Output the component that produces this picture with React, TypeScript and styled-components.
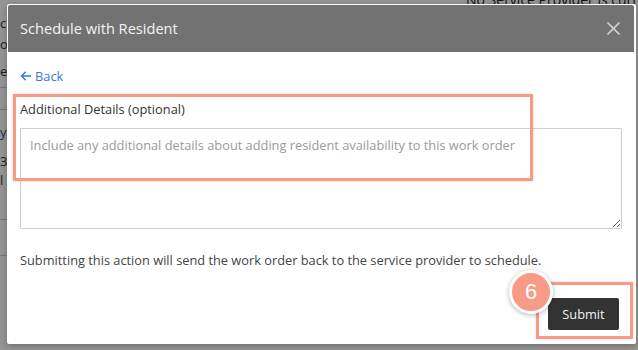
import React from "react";
import styled, { createGlobalStyle } from "styled-components";

const Global = createGlobalStyle`
  html, body { margin: 0; padding: 0; }
  body {
    width: 638px; height: 350px; overflow: hidden;
    font-family: "Open Sans", "Noto Sans", Arial, sans-serif;
    background: #ffffff;
  }
  * { box-sizing: border-box; }
`;

const Page = styled.div`
  position: relative;
  width: 638px;
  height: 350px;
  overflow: hidden;
  display: grid;
  grid-template-columns: 120px 1fr 200px;
  font-size: 13px;
  color: #222;
`;

const SideCol = styled.div`
  display: flex;
  flex-direction: column;
`;

const BgLine = styled.div<{ $h: number; $color?: string; $rule?: boolean }>`
  height: ${(p) => p.$h}px;
  line-height: ${(p) => p.$h}px;
  padding-left: 0;
  color: ${(p) => p.$color || "#333"};
  white-space: nowrap;
  border-bottom: ${(p) => (p.$rule ? "1px solid #ccc" : "none")};
`;

const RightCol = styled.div`
  grid-column: 3;
  padding-left: 28px;
  margin-top: -10px;
  white-space: nowrap;
  font-size: 14px;
`;

const Overlay = styled.div`
  position: absolute;
  inset: 0;
  background: rgba(0, 0, 0, 0.42);
`;

const Modal = styled.div`
  position: absolute;
  left: 7px;
  top: 4px;
  width: 629px;
  height: 340px;
  background: #fff;
  border-radius: 2px;
  padding: 1px 2px 0 1px;
  display: flex;
  flex-direction: column;
  box-shadow: 0 2px 6px rgba(0, 0, 0, 0.25);
`;

const Header = styled.div`
  height: 47px;
  background: #727272;
  border-radius: 2px 2px 0 0;
  display: flex;
  align-items: center;
  justify-content: space-between;
  padding: 0 13px 1px 12px;
`;

const Title = styled.h2`
  margin: 0;
  font-size: 14.6px;
  font-weight: 400;
  color: #f4f4f4;
`;

const CloseBtn = styled.button`
  border: 0;
  background: transparent;
  padding: 0;
  width: 15px;
  height: 15px;
  display: flex;
  cursor: pointer;
`;

const Body = styled.div`
  position: relative;
  flex: 1;
  display: flex;
  flex-direction: column;
  padding: 14px 14px 14px 12px;
`;

const BackLink = styled.a`
  display: inline-flex;
  align-items: center;
  gap: 3px;
  color: #3b78d8;
  font-size: 12.8px;
  text-decoration: none;
  height: 20px;
  align-self: flex-start;
  cursor: pointer;
`;

const Label = styled.label`
  margin-top: 14px;
  font-size: 12.8px;
  color: #333;
  line-height: 18px;
`;

const TextArea = styled.textarea`
  margin-top: 10px;
  width: 602px;
  height: 101px;
  border: 1px solid #cfcfcf;
  border-radius: 1px;
  padding: 7px 9px;
  font-family: inherit;
  font-size: 12.8px;
  line-height: 18px;
  color: #333;
  resize: vertical;
  &::placeholder { color: #9a9a9a; }
`;

const Note = styled.p`
  margin: 22px 0 0;
  font-size: 12.8px;
  color: #444;
  line-height: 18px;
`;

const Footer = styled.div`
  margin-top: auto;
  display: flex;
  justify-content: flex-end;
  padding-right: 1px;
`;

const SubmitBtn = styled.button`
  width: 71px;
  height: 32px;
  border: 0;
  border-radius: 2px;
  background: #333333;
  color: #f2f2f2;
  font-family: inherit;
  font-size: 12.8px;
  cursor: pointer;
`;

const Highlight = styled.div<{ $l: number; $t: number; $w: number; $h: number }>`
  position: absolute;
  left: ${(p) => p.$l}px;
  top: ${(p) => p.$t}px;
  width: ${(p) => p.$w}px;
  height: ${(p) => p.$h}px;
  border: 3px solid #f79b87;
  box-shadow: 0 0 3px rgba(0, 0, 0, 0.15);
  pointer-events: none;
`;

const Badge = styled.div`
  position: absolute;
  left: 501px;
  top: 218px;
  width: 44px;
  height: 44px;
  border-radius: 50%;
  background: #f79b87;
  border: 3px solid #fff;
  box-shadow: 0 1px 5px rgba(0, 0, 0, 0.3);
  color: #fff;
  font-size: 22px;
  font-family: "Liberation Sans", Arial, sans-serif;
  display: flex;
  align-items: center;
  justify-content: center;
`;

export default function App() {
  return (
    <>
      <Global />
      <Page>
        <SideCol>
          <BgLine $h={12}> </BgLine>
          <BgLine $h={22}>c</BgLine>
          <BgLine $h={20}>o</BgLine>
          <BgLine $h={34} $rule>e</BgLine>
          <BgLine $h={22} $rule> </BgLine>
          <BgLine $h={44} $color="#1d4f9a">y</BgLine>
          <BgLine $h={14}>3</BgLine>
          <BgLine $h={24}>l</BgLine>
          <BgLine $h={28} $rule> </BgLine>
          <BgLine $h={36} $rule> </BgLine>
        </SideCol>
        <RightCol>No Service Provider is curr</RightCol>
        <Overlay />
        <Modal role="dialog" aria-label="Schedule with Resident">
          <Header>
            <Title>Schedule with Resident</Title>
            <CloseBtn aria-label="Close">
              <svg width="15" height="15" viewBox="0 0 15 15">
                <path d="M1.5 1.5 L13.5 13.5 M13.5 1.5 L1.5 13.5" stroke="#d2d2d2" strokeWidth="1.7" fill="none" />
              </svg>
            </CloseBtn>
          </Header>
          <Body>
            <BackLink>
              <svg width="12" height="12" viewBox="0 0 12 12">
                <path d="M11 6 H1.8 M5.8 1.8 L1.5 6 L5.8 10.2" stroke="#3b78d8" strokeWidth="1.5" fill="none" />
              </svg>
              Back
            </BackLink>
            <Label htmlFor="details">Additional Details (optional)</Label>
            <TextArea
              id="details"
              placeholder="Include any additional details about adding resident availability to this work order"
            />
            <Note>Submitting this action will send the work order back to the service provider to schedule.</Note>
            <Footer>
              <SubmitBtn>Submit</SubmitBtn>
            </Footer>
            <Highlight $l={5} $t={42} $w={520} $h={87} />
            <Highlight $l={528} $t={230} $w={97} $h={57} />
            <Badge>6</Badge>
          </Body>
        </Modal>
      </Page>
    </>
  );
}
